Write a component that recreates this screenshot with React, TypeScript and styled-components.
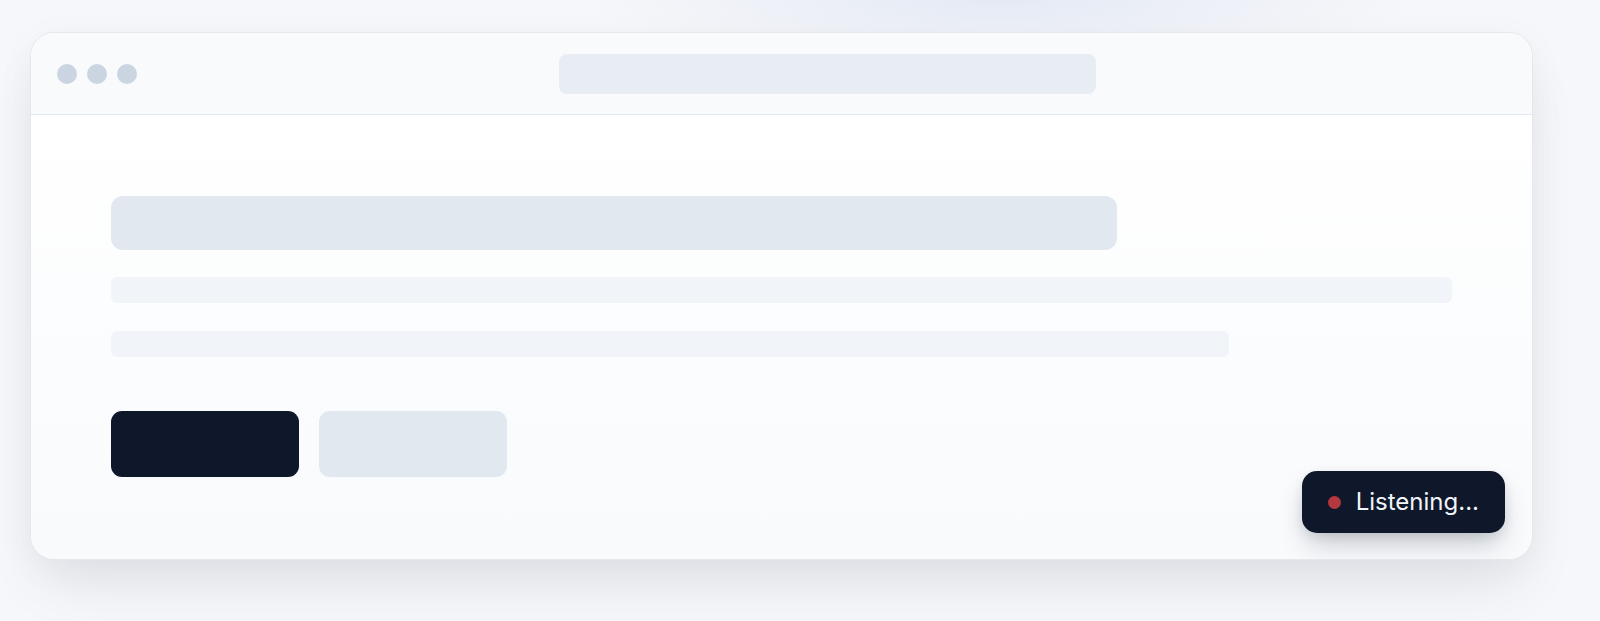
import React from 'react';
import styled, { createGlobalStyle } from 'styled-components';

type WidthProps = {
  $width: string;
};

type ButtonProps = {
  $primary?: boolean;
};

const GlobalStyle = createGlobalStyle`
  html, body {
    margin: 0;
    padding: 0;
    background: #f6f7fa;
    font-family: Inter, "Noto Sans", "Liberation Sans", sans-serif;
  }
  * {
    box-sizing: border-box;
  }
`;

const App = () => {
  return (
    <>
      <GlobalStyle />
      <Page>
        <Window>
          <TitleBar>
            <Dots>
              <Dot />
              <Dot />
              <Dot />
            </Dots>
            <AddressWrap>
              <AddressBar />
            </AddressWrap>
          </TitleBar>
          <Content>
            <Heading />
            <Line $width="100%" />
            <Line $width="83.4%" />
            <Actions>
              <Button $primary />
              <Button />
            </Actions>
          </Content>
          <Toast>
            <RecDot />
            <ToastText>Listening...</ToastText>
          </Toast>
        </Window>
      </Page>
    </>
  );
};

export default App;

const Page = styled.div`
  min-height: 100vh;
  padding: 32px 30px;
  background:
    radial-gradient(ellipse 420px 60px at 1000px 0px, rgba(226, 232, 244, 0.9), rgba(226, 232, 244, 0) 100%),
    #f6f7fa;
`;

const Window = styled.div`
  position: relative;
  width: 1503px;
  border: 1px solid #e3e7ee;
  border-radius: 24px;
  overflow: hidden;
  background: #ffffff;
  box-shadow:
    0 32px 60px -12px rgba(15, 23, 42, 0.09),
    0 8px 40px rgba(15, 23, 42, 0.04);
`;

const TitleBar = styled.div`
  display: flex;
  align-items: center;
  gap: 12px;
  height: 82px;
  padding: 0 26px;
  background: #f8fafc;
  border-bottom: 1px solid #e2e8f0;
`;

const Dots = styled.div`
  display: flex;
  gap: 10px;
`;

const Dot = styled.span`
  width: 20px;
  height: 20px;
  border-radius: 50%;
  background: #cbd5e1;
`;

const AddressWrap = styled.div`
  flex: 1;
  display: flex;
  justify-content: center;
`;

const AddressBar = styled.div`
  width: 537px;
  height: 40px;
  border-radius: 8px;
  background: #e8edf4;
`;

const Content = styled.div`
  padding: 81px 80px 82px;
  background: linear-gradient(180deg, #ffffff 0%, #f8fafc 100%);
`;

const Heading = styled.div`
  width: 75%;
  height: 54px;
  border-radius: 12px;
  background: #e2e8f0;
  margin-bottom: 27px;
`;

const Line = styled.div<WidthProps>`
  width: ${({ $width }) => $width};
  height: 26px;
  border-radius: 6px;
  background: #f1f5f9;
  & + & {
    margin-top: 28px;
  }
`;

const Actions = styled.div`
  display: flex;
  gap: 20px;
  margin-top: 54px;
`;

const Button = styled.div<ButtonProps>`
  width: 188px;
  height: 66px;
  border-radius: 11px;
  background: ${({ $primary }) => ($primary ? '#0f172a' : '#e2e8f0')};
`;

const Toast = styled.div`
  position: absolute;
  right: 27px;
  bottom: 26px;
  display: flex;
  align-items: center;
  gap: 15px;
  height: 62px;
  padding: 0 26px;
  border-radius: 15px;
  background: #0f172a;
  box-shadow: 0 14px 28px -6px rgba(15, 23, 42, 0.25), 0 4px 12px rgba(15, 23, 42, 0.08);
`;

const RecDot = styled.span`
  width: 13px;
  height: 13px;
  border-radius: 50%;
  background: #b4383e;
`;

const ToastText = styled.span`
  color: #f1f5f9;
  font-size: 24px;
  font-weight: 400;
  line-height: 1;
`;
